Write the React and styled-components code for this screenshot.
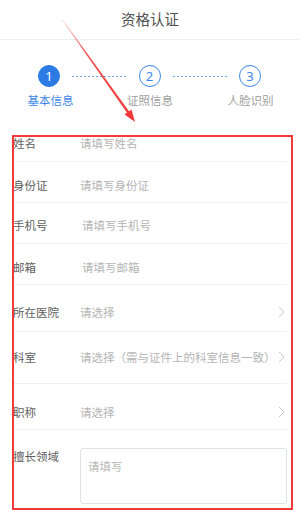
import React from "react";
import styled, { createGlobalStyle } from "styled-components";

const Global = createGlobalStyle`
  html, body { margin: 0; padding: 0; background: #fff; }
  body { font-family: "Noto Sans CJK SC", "Noto Sans", sans-serif; }
  * { box-sizing: border-box; }
`;

const Page = styled.div`
  position: relative;
  width: 300px;
  height: 523px;
  overflow: hidden;
  background: #fff;
`;

const Header = styled.div`
  height: 40px;
  border-bottom: 1px solid #efefef;
  display: flex;
  align-items: center;
  justify-content: center;
  font-size: 14.5px;
  color: #505050;
  padding-bottom: 2px;
`;

const Steps = styled.div`
  padding-top: 25px;
`;

const CircleRow = styled.div`
  display: flex;
  align-items: center;
  padding: 0 39px 0 38px;
`;

const Circle = styled.div`
  width: 22px;
  height: 22px;
  border-radius: 50%;
  display: flex;
  align-items: center;
  justify-content: center;
  font-family: "Noto Sans", "Liberation Sans", sans-serif;
  font-size: 13px;
  font-weight: 400;
  border: 1.5px solid ${(p) => (p.$active ? "#2c7be5" : "#3d87e8")};
  background: ${(p) => (p.$active ? "#2c7be5" : "#fff")};
  color: ${(p) => (p.$active ? "#fff" : "#3d87e8")};
`;

const Dash = styled.div`
  flex: 1;
  margin: 0 11px 0 12px;
  height: 1px;
  background-image: linear-gradient(to right, #6fa3ea 60%, transparent 60%);
  background-size: 4px 1px;
  background-repeat: repeat-x;
`;

const LabelRow = styled.div`
  display: grid;
  grid-template-columns: repeat(3, 100px);
  margin-top: 5px;
`;

const StepLabel = styled.div`
  text-align: center;
  font-size: 11.5px;
  line-height: 16px;
  color: ${(p) => (p.$active ? "#3d87e8" : "#a0a0a0")};
  padding-left: ${(p) => p.$shift || 0}px;
`;

const Form = styled.div`
  margin: 17px 13px 0 13px;
`;

const Row = styled.div`
  display: flex;
  align-items: ${(p) => (p.$top ? "flex-start" : "center")};
  padding: ${(p) => p.$pt}px 0 ${(p) => p.$pb}px;
  border-bottom: ${(p) => (p.$last ? "none" : "1px solid #f0f0f0")};
`;

const Label = styled.div`
  width: 67px;
  flex: none;
  font-size: 11.5px;
  line-height: 14px;
  color: #606060;
  padding-top: ${(p) => (p.$top ? 1 : 0)}px;
`;

const Value = styled.div`
  flex: 1;
  font-size: 11.5px;
  line-height: 14px;
  color: #b4b4b4;
  padding-left: ${(p) => p.$shift || 0}px;
  white-space: nowrap;
`;

const Chevron = styled.svg`
  flex: none;
  width: 7px;
  height: 12px;
  margin-right: 2px;
`;

const TextArea = styled.div`
  flex: 1;
  height: 56px;
  border: 1px solid #dfe2ea;
  border-radius: 3px;
  padding: 10px 7px;
  font-size: 11.5px;
  line-height: 14px;
  color: #b8b8b8;
`;

const Annotation = styled.div`
  position: absolute;
  left: 12px;
  top: 135px;
  width: 281px;
  height: 375px;
  border: 2px solid #f23a3a;
  pointer-events: none;
`;

const ArrowLayer = styled.svg`
  position: absolute;
  left: 0;
  top: 0;
  width: 300px;
  height: 523px;
  pointer-events: none;
`;

const Arrow = () => (
  <Chevron viewBox="0 0 7 12">
    <path d="M1 1 L6 6 L1 11" fill="none" stroke="#c8c8c8" strokeWidth="1" />
  </Chevron>
);

const rows = [
  { label: "姓名", value: "请填写姓名", pt: 11, pb: 11 },
  { label: "身份证", value: "请填写身份证", pt: 16, pb: 10 },
  { label: "手机号", value: "请填写手机号", pt: 15, pb: 11, shift: 2 },
  { label: "邮箱", value: "请填写邮箱", pt: 16, pb: 10, shift: 2 },
  { label: "所在医院", value: "请选择", pt: 20, pb: 12, chevron: true },
  { label: "科室", value: "请选择（需与证件上的科室信息一致）", pt: 18, pb: 19, chevron: true },
  { label: "职称", value: "请选择", pt: 21, pb: 10, chevron: true },
];

export default function App() {
  return (
    <Page>
      <Global />
      <Header>资格认证</Header>
      <Steps>
        <CircleRow>
          <Circle $active>1</Circle>
          <Dash />
          <Circle>2</Circle>
          <Dash />
          <Circle>3</Circle>
        </CircleRow>
        <LabelRow>
          <StepLabel $active $shift={1}>基本信息</StepLabel>
          <StepLabel>证照信息</StepLabel>
          <StepLabel $shift={1}>人脸识别</StepLabel>
        </LabelRow>
      </Steps>
      <Form>
        {rows.map((r) => (
          <Row key={r.label} $pt={r.pt} $pb={r.pb}>
            <Label>{r.label}</Label>
            <Value $shift={r.shift}>{r.value}</Value>
            {r.chevron && <Arrow />}
          </Row>
        ))}
        <Row $pt={18} $pb={0} $top $last>
          <Label $top>擅长领域</Label>
          <TextArea>请填写</TextArea>
        </Row>
      </Form>
      <Annotation />
      <ArrowLayer viewBox="0 0 300 523">
        <defs>
          <linearGradient id="fade" x1="62" y1="20" x2="135" y2="122" gradientUnits="userSpaceOnUse">
            <stop offset="0" stopColor="#f23a3a" stopOpacity="0.15" />
            <stop offset="0.35" stopColor="#f23a3a" stopOpacity="0.9" />
            <stop offset="1" stopColor="#f23a3a" stopOpacity="1" />
          </linearGradient>
        </defs>
        <polygon points="62,20 62.8,19.6 129.5,112 127.5,113.4" fill="url(#fade)" />
        <polygon points="135,122 124.5,114.6 131.5,109.6" fill="#f23a3a" />
      </ArrowLayer>
    </Page>
  );
}
